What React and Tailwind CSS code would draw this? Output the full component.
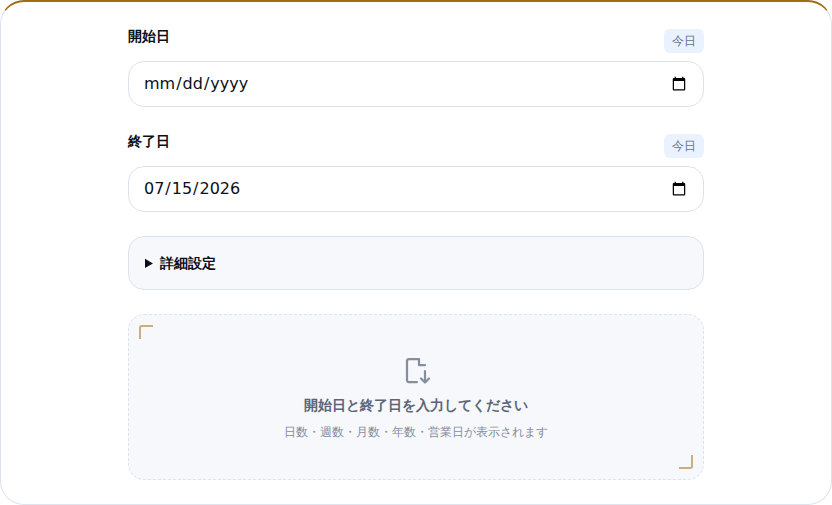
import React from "react";

function DateField({ label, value }) {
    return (
        <div className="flex flex-col gap-2">
            <div className="flex items-start justify-between">
                <label className="text-sm leading-[20px] font-bold text-[#0b0f19] -mt-[3px]">{label}</label>
                <button className="h-6 w-10 rounded-md bg-[#eaf2ff] text-xs text-[#64748b]">今日</button>
            </div>
            <input
                type="date"
                defaultValue={value}
                className="h-[46px] w-full rounded-2xl border border-[#dbe3ee] bg-white px-[14px] text-base text-[#0b0f19]"
            />
        </div>
    );
}

export default function App() {
    return (
        <div className="h-[505px] w-[832px] overflow-hidden bg-white font-['DejaVu_Sans',sans-serif]">
            <div className="h-full rounded-3xl border border-t-2 border-[#dde4ef] border-t-[#a16c13] bg-white pt-[27px]">
                <div className="mx-auto flex w-[576px] flex-col">
                    <div className="mb-[27px]">
                        <DateField label="開始日" value="" />
                    </div>
                    <div className="mb-6">
                        <DateField label="終了日" value="2026-07-15" />
                    </div>
                    <details className="mb-6 h-[54px] rounded-2xl border border-[#dbe3ee] bg-[#f6f8fc] px-4 py-[15px]">
                        <summary className="cursor-pointer text-sm leading-[22px] font-bold text-[#0b0f19]">詳細設定</summary>
                    </details>
                    <div className="relative flex h-[166px] flex-col items-center rounded-2xl border border-dashed border-[#dbe3ee] bg-[#f6f8fc] pt-[41px]">
                        <span className="absolute top-[10px] left-[10px] h-[14px] w-[14px] rounded-tl-[3px] border-t-2 border-l-2 border-[#c9ad7f]"></span>
                        <span className="absolute right-[10px] bottom-[10px] h-[14px] w-[14px] rounded-br-[3px] border-r-2 border-b-2 border-[#c9ad7f]"></span>
                        <svg className="h-7 w-7 text-[#868e9d]" fill="none" stroke="currentColor" viewBox="0 0 28 28" strokeWidth={2.25} strokeLinecap="round" strokeLinejoin="round">
                            <path d="M15 26H7a2 2 0 0 1-2-2V5a2 2 0 0 1 2-2h10v6h6" />
                            <path d="M23 15v11M19 22.5 23 26.5l4-4" />
                        </svg>
                        <p className="mt-[11px] text-sm leading-[20px] font-bold text-[#5b6577]">開始日と終了日を入力してください</p>
                        <p className="mt-[7px] text-xs leading-[20px] text-[#868e9d]">日数・週数・月数・年数・営業日が表示されます</p>
                    </div>
                </div>
            </div>
        </div>
    );
}
